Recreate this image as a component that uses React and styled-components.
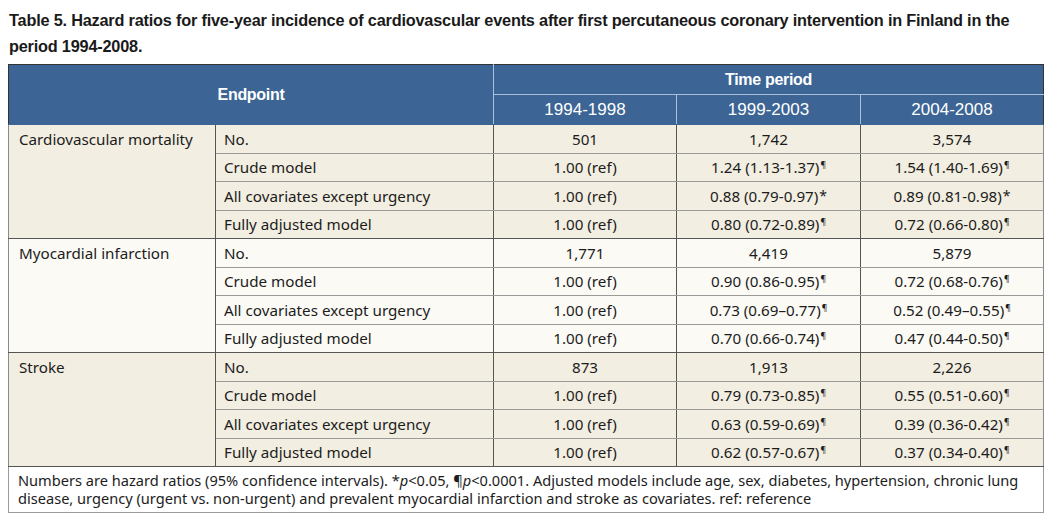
import React from "react";
import styled, { createGlobalStyle } from "styled-components";

const Global = createGlobalStyle`
  html, body { margin: 0; padding: 0; background: #ffffff; }
  body { font-family: "Liberation Sans", Arial, sans-serif; }
`;

const Page = styled.div`
  width: 1055px;
  height: 526px;
  padding: 7px 12px 0 8px;
  box-sizing: border-box;
  overflow: hidden;
`;

const Title = styled.h1`
  margin: 0 0 0 1px;
  font-family: "Liberation Sans", Arial, sans-serif;
  font-weight: bold;
  font-size: 16.3px;
  line-height: 26px;
  color: #1a1a1a;
  white-space: nowrap;
  letter-spacing: -0.2px;
`;

const Table = styled.table`
  margin-top: 5px;
  width: 1035px;
  border-collapse: collapse;
  table-layout: fixed;
  font-family: "Noto Sans", "DejaVu Sans", sans-serif;
  font-size: 15.2px;
  color: #1c1c1c;
  border-top: 1px solid #333;
`;

const HeadCell = styled.th`
  background: #3c6595;
  color: #ffffff;
  font-family: "Liberation Sans", Arial, sans-serif;
  font-weight: ${(p) => (p.$bold ? "bold" : "normal")};
  font-size: ${(p) => (p.$bold ? "16px" : "17px")};
  letter-spacing: ${(p) => (p.$bold ? "-0.3px" : "0")};
  height: ${(p) => p.$h}px;
  padding: 0;
  text-align: center;
  border-left: 1px solid ${(p) => (p.$edge ? "#333" : "#a9bfdb")};
  border-right: 1px solid ${(p) => (p.$edgeR ? "#333" : "#a9bfdb")};
  border-bottom: 1px solid ${(p) => (p.$under ? "#a9bfdb" : "#3c6595")};
`;

const Row = styled.tr`
  height: 28.5px;
  background: ${(p) => (p.$alt ? "#fbfaf5" : "#f2eee1")};
`;

const GroupCell = styled.td`
  vertical-align: top;
  padding: 4px 10px 0 10px;
  line-height: 20px;
  border-left: 1px solid #8a8a8a;
  border-right: 1px solid #555;
  border-bottom: 1px solid #555;
`;

const LabelCell = styled.td`
  padding: 0 8px;
  text-align: left;
  border-right: 1px solid #555;
  border-bottom: 1px solid ${(p) => (p.$last ? "#555" : "#9a9a9a")};
`;

const ValueCell = styled.td`
  padding: 0;
  text-align: center;
  border-right: 1px solid ${(p) => (p.$end ? "#8a8a8a" : "#555")};
  border-bottom: 1px solid ${(p) => (p.$last ? "#555" : "#9a9a9a")};
`;

const Mark = styled.sup`
  font-size: ${(p) => (p.$star ? "14px" : "8.5px")};
  vertical-align: ${(p) => (p.$star ? "1px" : "5px")};
  line-height: 0;
  margin-left: 1px;
`;

const Note = styled.td`
  background: #ffffff;
  padding: 4px 9px 5px 9px;
  line-height: 18px;
  font-size: 14.6px;
  border-left: 1px solid #9a9a9a;
  border-right: 1px solid #9a9a9a;
  border-bottom: 1px solid #9a9a9a;
`;

const P = styled.i``;

const groups = [
  {
    name: "Cardiovascular mortality",
    rows: [
      ["No.", "501", "1,742", "", "3,574", ""],
      ["Crude model", "1.00 (ref)", "1.24 (1.13-1.37)", "¶", "1.54 (1.40-1.69)", "¶"],
      ["All covariates except urgency", "1.00 (ref)", "0.88 (0.79-0.97)", "*", "0.89 (0.81-0.98)", "*"],
      ["Fully adjusted model", "1.00 (ref)", "0.80 (0.72-0.89)", "¶", "0.72 (0.66-0.80)", "¶"],
    ],
  },
  {
    name: "Myocardial infarction",
    alt: true,
    rows: [
      ["No.", "1,771", "4,419", "", "5,879", ""],
      ["Crude model", "1.00 (ref)", "0.90 (0.86-0.95)", "¶", "0.72 (0.68-0.76)", "¶"],
      ["All covariates except urgency", "1.00 (ref)", "0.73 (0.69–0.77)", "¶", "0.52 (0.49–0.55)", "¶"],
      ["Fully adjusted model", "1.00 (ref)", "0.70 (0.66-0.74)", "¶", "0.47 (0.44-0.50)", "¶"],
    ],
  },
  {
    name: "Stroke",
    rows: [
      ["No.", "873", "1,913", "", "2,226", ""],
      ["Crude model", "1.00 (ref)", "0.79 (0.73-0.85)", "¶", "0.55 (0.51-0.60)", "¶"],
      ["All covariates except urgency", "1.00 (ref)", "0.63 (0.59-0.69)", "¶", "0.39 (0.36-0.42)", "¶"],
      ["Fully adjusted model", "1.00 (ref)", "0.62 (0.57-0.67)", "¶", "0.37 (0.34-0.40)", "¶"],
    ],
  },
];

function Value({ v, m, last, end }) {
  return (
    <ValueCell $last={last} $end={end}>
      {v}
      {m && <Mark $star={m === "*"}>{m}</Mark>}
    </ValueCell>
  );
}

export default function App() {
  return (
    <>
      <Global />
      <Page>
        <Title>
          Table 5. Hazard ratios for five-year incidence of cardiovascular events after first percutaneous coronary intervention in Finland in the
          <br />
          period 1994-2008.
        </Title>
        <Table>
          <colgroup>
            <col style={{ width: 207 }} />
            <col style={{ width: 278 }} />
            <col style={{ width: 183 }} />
            <col style={{ width: 184 }} />
            <col style={{ width: 183 }} />
          </colgroup>
          <thead>
            <tr>
              <HeadCell colSpan={2} rowSpan={2} $bold $edge $h={29}>
                Endpoint
              </HeadCell>
              <HeadCell colSpan={3} $bold $edgeR $under $h={29}>
                Time period
              </HeadCell>
            </tr>
            <tr>
              <HeadCell $h={29}>1994-1998</HeadCell>
              <HeadCell $h={29}>1999-2003</HeadCell>
              <HeadCell $edgeR $h={29}>2004-2008</HeadCell>
            </tr>
          </thead>
          <tbody>
            {groups.map((g) =>
              g.rows.map((r, i) => {
                const last = i === g.rows.length - 1;
                return (
                  <Row key={g.name + i} $alt={g.alt}>
                    {i === 0 && <GroupCell rowSpan={4}>{g.name}</GroupCell>}
                    <LabelCell $last={last}>{r[0]}</LabelCell>
                    <Value v={r[1]} last={last} />
                    <Value v={r[2]} m={r[3]} last={last} />
                    <Value v={r[4]} m={r[5]} last={last} end />
                  </Row>
                );
              })
            )}
            <tr>
              <Note colSpan={5}>
                Numbers are hazard ratios (95% confidence intervals). *<P>p</P>&lt;0.05, ¶<P>p</P>&lt;0.0001. Adjusted models include age, sex, diabetes, hypertension, chronic lung disease, urgency (urgent vs. non-urgent) and prevalent myocardial infarction and stroke as covariates. ref: reference
              </Note>
            </tr>
          </tbody>
        </Table>
      </Page>
    </>
  );
}
